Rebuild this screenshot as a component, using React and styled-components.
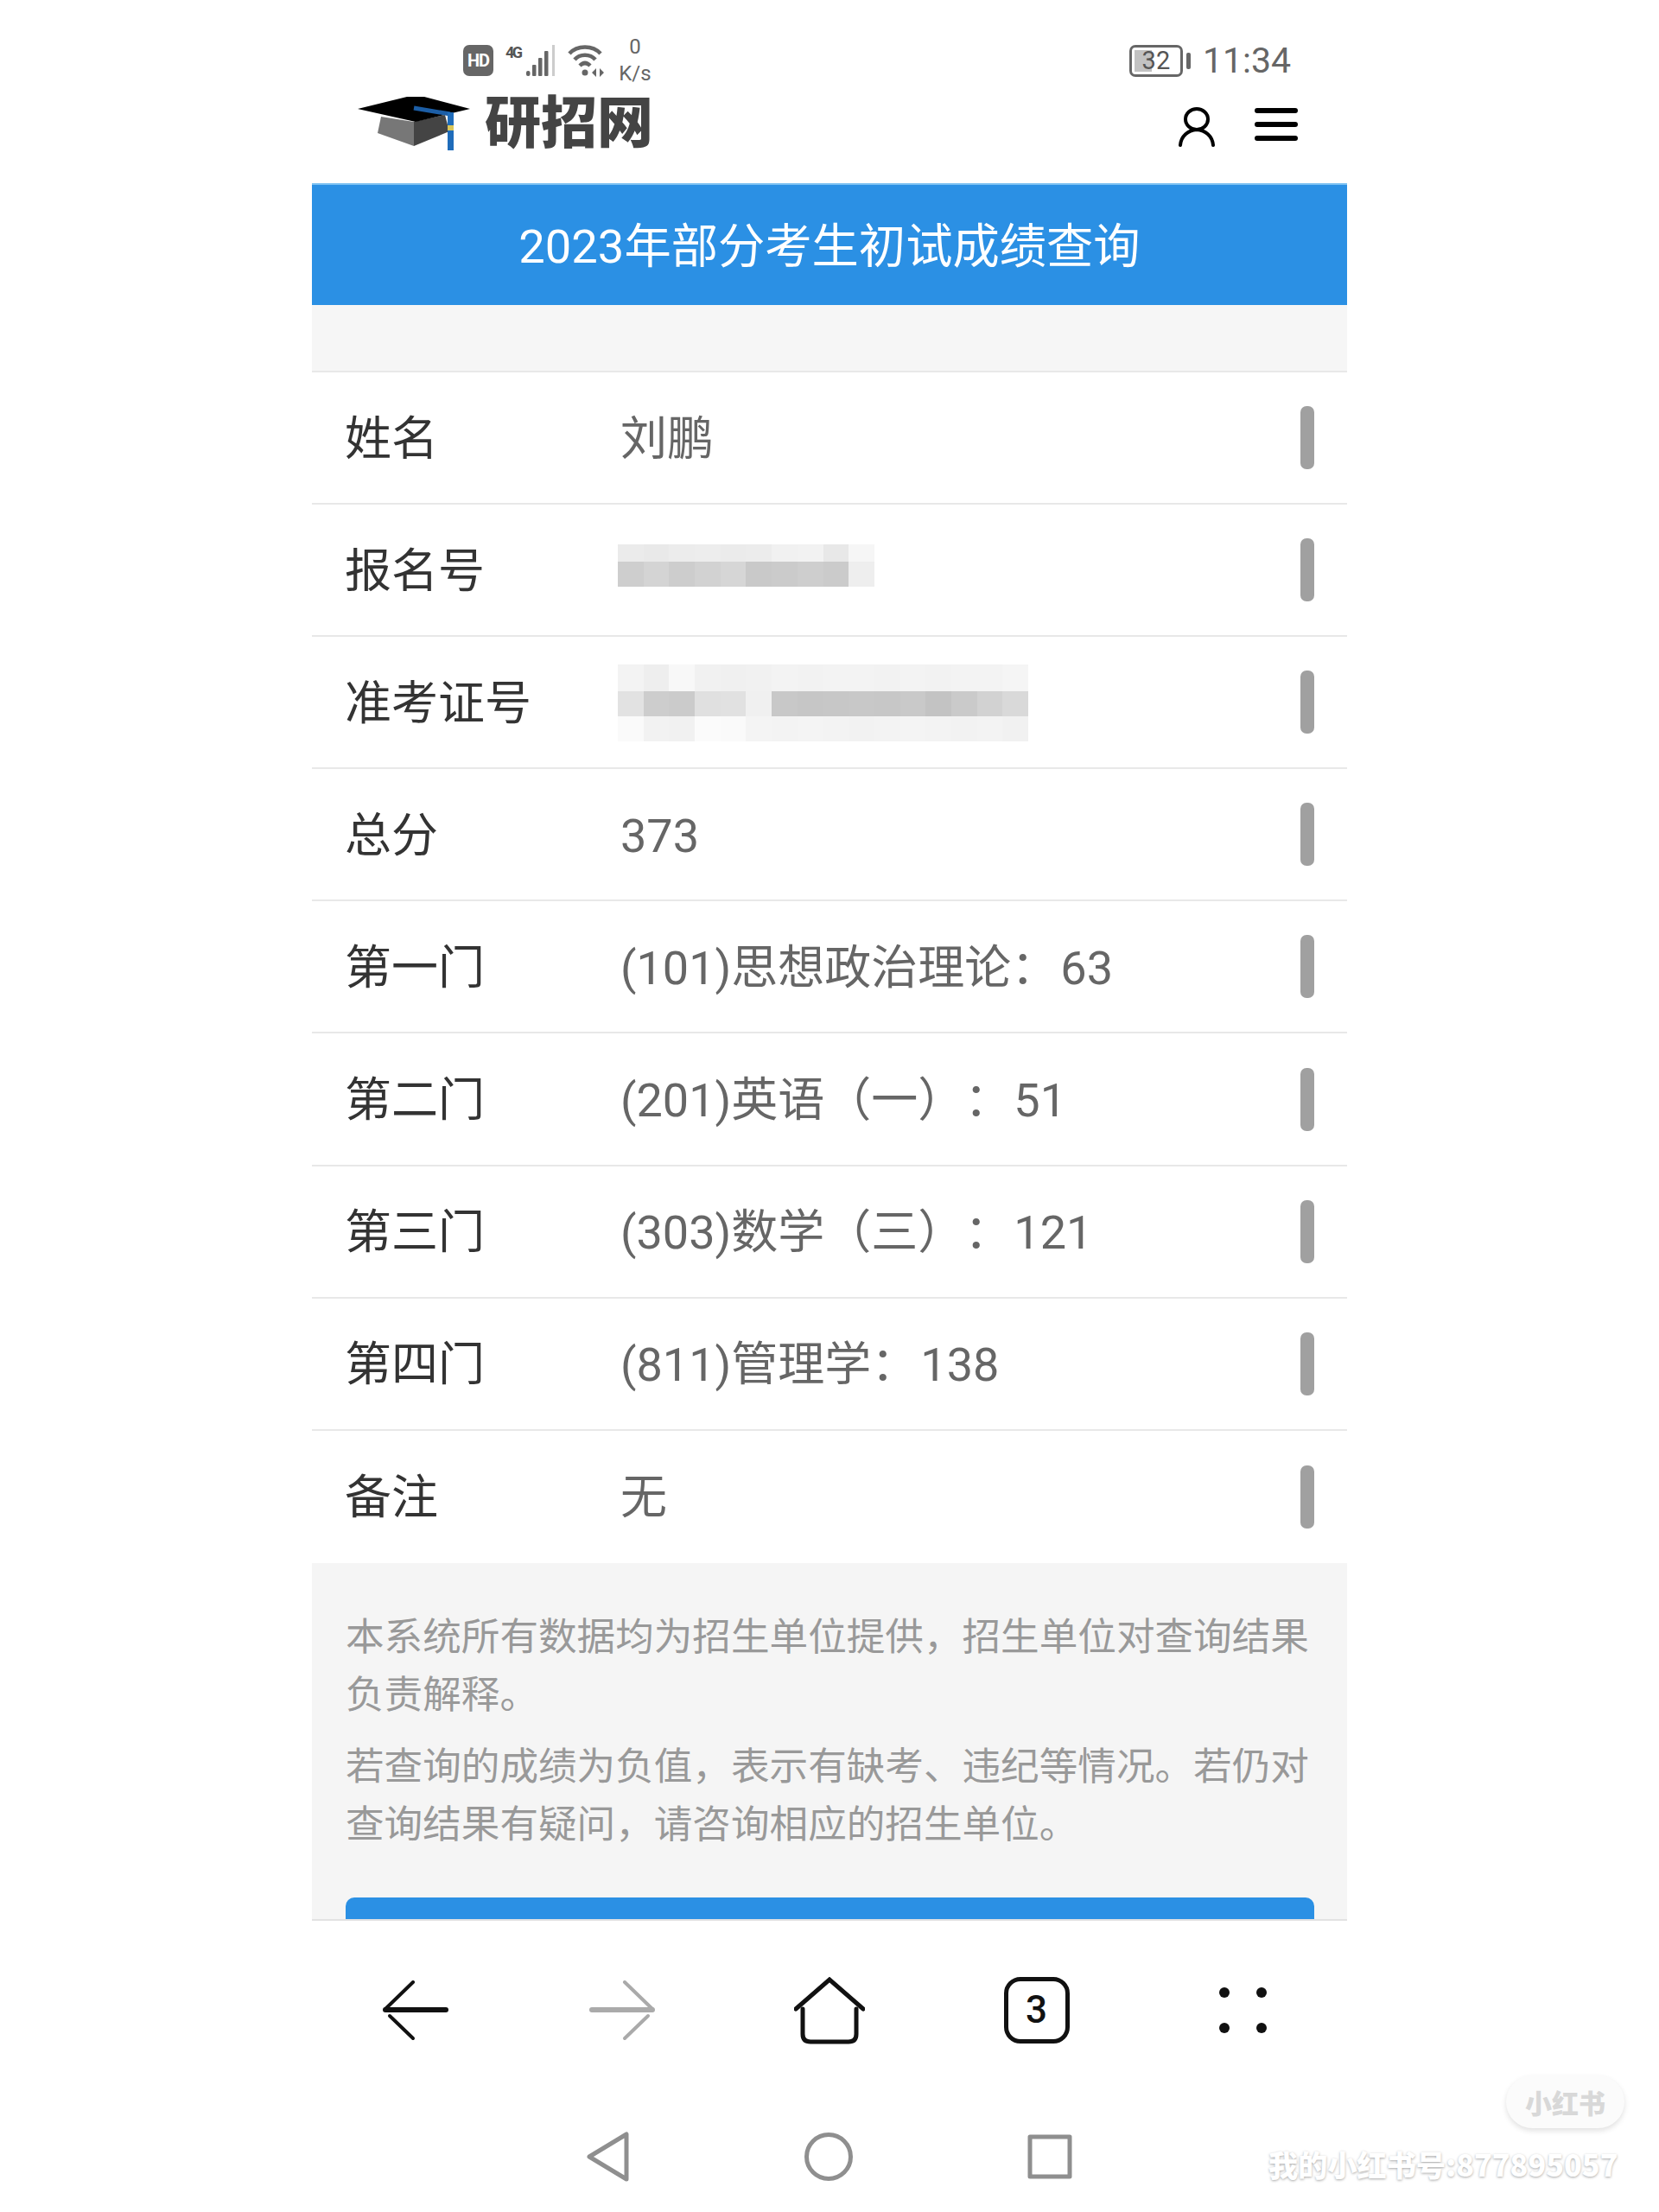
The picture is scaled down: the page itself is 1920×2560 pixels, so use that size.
import React from 'react'
import styled, { createGlobalStyle } from 'styled-components'

const GlobalStyle = createGlobalStyle`
  html, body {
    margin: 0;
    padding: 0;
    background: #fff;
  }
  body {
    font-family: Roboto, "Noto Sans CJK SC", sans-serif;
  }
`

const Page = styled.div`
  position: relative;
  width: 1920px;
  height: 2560px;
  overflow: hidden;
  background: #fff;
`

const Phone = styled.div`
  width: 1198px;
  margin: 0 auto;
  display: flex;
  flex-direction: column;
`

const Top = styled.header`
  height: 212px;
  box-sizing: border-box;
  padding-top: 32px;
`

const StatusBar = styled.div`
  height: 76px;
  display: flex;
  align-items: center;
  justify-content: space-between;
  padding: 0 65px 0 175px;
`

const StatusGroup = styled.div`
  display: flex;
  align-items: center;
  gap: ${(p) => p.$gap || 14}px;
`

const HdBadge = styled.span`
  width: 35px;
  height: 36px;
  border-radius: 7px;
  background: #666;
  color: #fff;
  font-size: 20px;
  font-weight: 700;
  letter-spacing: -1px;
  display: flex;
  align-items: center;
  justify-content: center;
`

const Speed = styled.div`
  width: 42px;
  margin-left: -1px;
  color: #666;
  font-size: 24px;
  line-height: 31px;
  text-align: center;
  white-space: nowrap;
`

const Battery = styled.div`
  display: flex;
  align-items: center;
  gap: 4px;
`

const BatteryBody = styled.div`
  width: 62px;
  height: 37px;
  box-sizing: border-box;
  border: 3px solid #666;
  border-radius: 7px;
  background: linear-gradient(90deg, #c2c2c2 20px, transparent 20px) 3px 3px / 100% 25px no-repeat;
  color: #555;
  font-size: 29px;
  line-height: 31px;
  text-align: center;
`

const BatteryNub = styled.span`
  width: 5px;
  height: 19px;
  border-radius: 2px;
  background: #666;
`

const Time = styled.span`
  color: #666;
  font-size: 41px;
`

const BrandRow = styled.div`
  display: flex;
  align-items: flex-start;
  justify-content: space-between;
  padding: 0 57px 0 52px;
  margin-top: 1px;
`

const Brand = styled.div`
  display: flex;
  align-items: flex-start;
  gap: 16px;
`

const CapSlot = styled.div`
  display: flex;
  margin-top: 2px;
`

const BrandName = styled.span`
  color: #444;
  font-family: "Noto Sans CJK SC", sans-serif;
  font-size: 65px;
  font-weight: 900;
  line-height: 56px;
`

const HeadIcons = styled.div`
  display: flex;
  align-items: flex-start;
  gap: 45px;
  margin-top: 15px;
`

const Title = styled.h1`
  margin: 0;
  height: 141px;
  background: #2b90e4;
  border-top: 2px solid #7cc1f2;
  box-sizing: border-box;
  color: #fff;
  font-size: 54.3px;
  font-weight: 400;
  line-height: 143px;
  text-align: center;
`

const Band = styled.div`
  height: 76px;
  background: #f6f6f6;
  border-bottom: 2px solid #e8e8e8;
  box-sizing: content-box;
`

const Row = styled.div`
  height: 153.1px;
  box-sizing: border-box;
  display: flex;
  align-items: center;
  padding: 0 38px 0 39px;
  border-bottom: ${(p) => (p.$last ? 'none' : '2px solid #e8e8e8')};
`

const Label = styled.div`
  width: 319px;
  flex: none;
  color: #333;
  font-size: 54px;
  line-height: 60px;
  margin-top: 4px;
  margin-left: -1px;
`

const Value = styled.div`
  flex: 1;
  color: #666;
  font-size: 54px;
  line-height: 60px;
  white-space: nowrap;
  text-spacing-trim: space-all;
  margin-top: 4px;
`

const Score = styled.span`
  margin-left: 3px;
`

const Grip = styled.span`
  width: 16px;
  height: 73px;
  flex: none;
  border-radius: 7px;
  background: #a0a0a0;
`

const MosaicGrid = styled.div`
  display: grid;
  grid-template-columns: repeat(${(p) => p.$cols}, 29.7px);
  grid-template-rows: ${(p) => p.$rows};
  margin-left: -3px;
  margin-top: ${(p) => p.$top || 0}px;
`

const MosaicCell = styled.span`
  background: ${(p) => p.$color};
`

const Notice = styled.section`
  height: 412px;
  box-sizing: border-box;
  overflow: hidden;
  background: #f5f5f5;
  padding: 53px 28px 0 39px;
`

const NoticeText = styled.p`
  margin: 0 0 16px;
  color: #999;
  font-size: 44.6px;
  line-height: 67px;
`

const QueryButton = styled.div`
  height: 60px;
  margin: 50px 10px 0 0;
  border-radius: 10px;
  background: #2b90e4;
`

const BrowserNav = styled.nav`
  height: 210px;
  box-sizing: border-box;
  border-top: 2px solid #e2e2e2;
  display: grid;
  grid-template-columns: repeat(5, 1fr);
  align-items: center;
  justify-items: center;
`

const SystemNav = styled.nav`
  height: 130px;
  display: flex;
  align-items: center;
  justify-content: center;
  gap: 202px;
`

const TabCount = styled.div`
  width: 76px;
  height: 77px;
  box-sizing: border-box;
  border: 5px solid #111;
  border-radius: 19px;
  color: #111;
  font-size: 44px;
  font-weight: 500;
  line-height: 67px;
  text-align: center;
`

const Pill = styled.div`
  position: absolute;
  left: 1743px;
  top: 2402px;
  width: 137px;
  height: 61px;
  border-radius: 31px;
  background: #fbfbfb;
  box-shadow: 0 3px 6px rgba(0, 0, 0, 0.12);
  color: #d8d8d8;
  font-family: "Noto Sans CJK SC", sans-serif;
  font-size: 31px;
  font-weight: 900;
  line-height: 61px;
  text-align: center;
`

const Watermark = styled.div`
  position: absolute;
  left: 1468px;
  top: 2482px;
  color: #fff;
  font-family: "Noto Sans CJK SC", sans-serif;
  font-size: 34.2px;
  font-weight: 900;
  line-height: 44px;
  white-space: nowrap;
  text-shadow: 0 1px 3px rgba(0, 0, 0, 0.35);
`

const SignalIcon = () => (
  <svg width="58" height="38" viewBox="0 0 58 38">
    <text x="0" y="16" fontFamily="Roboto" fontSize="18" fontWeight="700" fill="#555" textLength="20">4G</text>
    <g fill="#666">
      <rect x="24" y="31" width="4.5" height="6" rx="2" />
      <rect x="31" y="24" width="4.5" height="13" rx="1" />
      <rect x="38" y="16" width="4.5" height="21" rx="1" />
      <rect x="45" y="8" width="4.5" height="29" rx="1" />
    </g>
    <rect x="54" y="1" width="3" height="36" fill="#ccc" />
  </svg>
)

const WifiIcon = () => (
  <svg width="44" height="38" viewBox="0 0 44 38" fill="none" stroke="#666" strokeWidth="4.5">
    <path d="M2 11 C11 1 29 1 38 11" />
    <path d="M8 18 C14 11 26 11 32 18" />
    <path d="M14 25 C18 21 22 21 26 25" />
    <circle cx="20" cy="33" r="3.5" fill="#666" stroke="none" />
    <path d="M33 28 L28 33 L33 38 Z M37 28 L42 33 L37 38 Z" fill="#666" stroke="none" />
  </svg>
)

const CapLogo = () => (
  <svg width="132" height="64" viewBox="412 112 132 64">
    <polygon points="440,136 436,155 478,170 478,142" fill="#777" />
    <polygon points="478,142 478,170 519,153 514,134" fill="#444" />
    <polygon points="413,127 470,113 490,113 543,127 480,142" fill="#000" />
    <path d="M478 126 L520 133" stroke="#1c5ea6" strokeWidth="5" />
    <rect x="517" y="131" width="7" height="44" fill="#1f6cba" />
    <rect x="517" y="146" width="7" height="6" fill="#d9c65a" />
  </svg>
)

const UserIcon = () => (
  <svg width="44" height="46" viewBox="0 0 44 46" fill="none" stroke="#000" strokeWidth="4" strokeLinecap="round">
    <ellipse cx="22" cy="14" rx="13" ry="12" />
    <path d="M3 44 C4 33 12 27 22 26 C32 27 40 33 41 44" />
  </svg>
)

const MenuIcon = () => (
  <svg width="50" height="46" viewBox="0 0 50 46" fill="#000">
    <rect y="1" width="50" height="6" rx="3" />
    <rect y="17" width="50" height="6" rx="3" />
    <rect y="33" width="50" height="6" rx="3" />
  </svg>
)

const BackIcon = ({ color = '#111', flip }) => (
  <svg
    width="76"
    height="70"
    viewBox="0 0 76 70"
    fill="none"
    stroke={color}
    strokeLinecap="round"
    style={flip ? { transform: 'scaleX(-1)' } : undefined}
  >
    <path d="M3 34 H73" strokeWidth="6" />
    <path d="M3 33 L35 2" strokeWidth="4" />
    <path d="M8 41 L35 67" strokeWidth="4" />
  </svg>
)

const HomeIcon = () => (
  <svg width="82" height="78" viewBox="0 0 82 78" fill="none" stroke="#111" strokeWidth="5" strokeLinecap="round">
    <path d="M2 37 L41 3 L80 37" />
    <path d="M10 37 V66 Q10 75 19 75 H63 Q72 75 72 66 V37" />
  </svg>
)

const DotsIcon = () => (
  <svg width="56" height="54" viewBox="0 0 56 54" fill="#111">
    <circle cx="6" cy="6" r="6" />
    <circle cx="49" cy="6" r="6" />
    <circle cx="6" cy="47" r="6" />
    <circle cx="49" cy="47" r="6" />
  </svg>
)

const SysBack = () => (
  <svg width="50" height="58" viewBox="0 0 50 58" fill="none" stroke="#8f8f8f" strokeWidth="5" strokeLinejoin="round">
    <path d="M46 3 V55 L3 29 Z" />
  </svg>
)

const SysHome = () => (
  <svg width="56" height="58" viewBox="0 0 56 58" fill="none" stroke="#8f8f8f" strokeWidth="5">
    <circle cx="28" cy="29" r="25.5" />
  </svg>
)

const SysRecent = () => (
  <svg width="52" height="52" viewBox="0 0 52 52" fill="none" stroke="#8f8f8f" strokeWidth="5" strokeLinejoin="round">
    <rect x="3" y="3" width="46" height="46" />
  </svg>
)

const regMosaic = [
  ['#ebebeb', '#e9e9e9', '#ececec', '#ededed', '#ebebeb', '#ececec', '#f1f1f1', '#f2f2f2', '#e8e8e8', '#f6f6f6'],
  ['#cecece', '#d4d4d4', '#cdcdcd', '#d2d2d2', '#d6d6d6', '#c9c9c9', '#cbcbcb', '#cecece', '#cbcbcb', '#eeeeee'],
]

const examMosaic = [
  ['#f3f3f3', '#eeeeee', '#f8f8f8', '#f1f1f1', '#f0f0f0', '#f1f1f1', '#f3f3f3', '#f2f2f2', '#f3f3f3', '#f3f3f3', '#f2f2f2', '#f3f3f3', '#f2f2f2', '#f3f3f3', '#f3f3f3', '#f5f5f5'],
  ['#e2e2e2', '#cdcdcd', '#cbcbcb', '#e0e0e0', '#e1e1e1', '#f0f0f0', '#c8c8c8', '#c6c6c6', '#c7c7c7', '#c8c8c8', '#c7c7c7', '#c9c9c9', '#c3c3c3', '#cacaca', '#d2d2d2', '#d9d9d9'],
  ['#fafafa', '#f2f2f2', '#f1f1f1', '#fbfbfb', '#fafafa', '#f4f4f4', '#f3f3f3', '#f4f4f4', '#f3f3f3', '#f2f2f2', '#f3f3f3', '#f4f4f4', '#f3f3f3', '#f2f2f2', '#f3f3f3', '#f1f1f1'],
]

const Mosaic = ({ rows, heights, top }) => (
  <MosaicGrid $cols={rows[0].length} $rows={heights} $top={top}>
    {rows.flat().map((color, i) => (
      <MosaicCell key={i} $color={color} />
    ))}
  </MosaicGrid>
)

const results = [
  { label: '姓名', value: '刘鹏' },
  { label: '报名号', mosaic: regMosaic, heights: '20px 29px', top: -15 },
  { label: '准考证号', mosaic: examMosaic, heights: '31px 29px 29px', top: -3 },
  { label: '总分', value: '373' },
  { label: '第一门', value: '(101)思想政治理论：', score: '63' },
  { label: '第二门', value: '(201)英语（一）：', score: '51' },
  { label: '第三门', value: '(303)数学（三）：', score: '121' },
  { label: '第四门', value: '(811)管理学：', score: '138' },
  { label: '备注', value: '无' },
]

const App = () => {
  return (
    <Page>
      <GlobalStyle />
      <Phone>
        <Top>
          <StatusBar>
            <StatusGroup>
              <HdBadge>HD</HdBadge>
              <SignalIcon />
              <WifiIcon />
              <Speed>
                0<br />K/s
              </Speed>
            </StatusGroup>
            <StatusGroup $gap={0}>
              <Battery>
                <BatteryBody>32</BatteryBody>
                <BatteryNub />
              </Battery>
              <Time>11:34</Time>
            </StatusGroup>
          </StatusBar>
          <BrandRow>
            <Brand>
              <CapSlot>
                <CapLogo />
              </CapSlot>
              <BrandName>研招网</BrandName>
            </Brand>
            <HeadIcons>
              <UserIcon />
              <MenuIcon />
            </HeadIcons>
          </BrandRow>
        </Top>
        <Title>2023年部分考生初试成绩查询</Title>
        <Band />
        {results.map((item, i) => (
          <Row key={item.label} $last={i === results.length - 1}>
            <Label>{item.label}</Label>
            <Value>
              {item.mosaic ? (
                <Mosaic rows={item.mosaic} heights={item.heights} top={item.top} />
              ) : (
                item.value
              )}
              {item.score && <Score>{item.score}</Score>}
            </Value>
            <Grip />
          </Row>
        ))}
        <Notice>
          <NoticeText>本系统所有数据均为招生单位提供，招生单位对查询结果负责解释。</NoticeText>
          <NoticeText>若查询的成绩为负值，表示有缺考、违纪等情况。若仍对查询结果有疑问，请咨询相应的招生单位。</NoticeText>
          <QueryButton />
        </Notice>
        <BrowserNav>
          <BackIcon />
          <BackIcon color="#aaa" flip />
          <HomeIcon />
          <TabCount>3</TabCount>
          <DotsIcon />
        </BrowserNav>
        <SystemNav>
          <SysBack />
          <SysHome />
          <SysRecent />
        </SystemNav>
      </Phone>
      <Pill>小红书</Pill>
      <Watermark>我的小红书号:877895057</Watermark>
    </Page>
  )
}

export default App
